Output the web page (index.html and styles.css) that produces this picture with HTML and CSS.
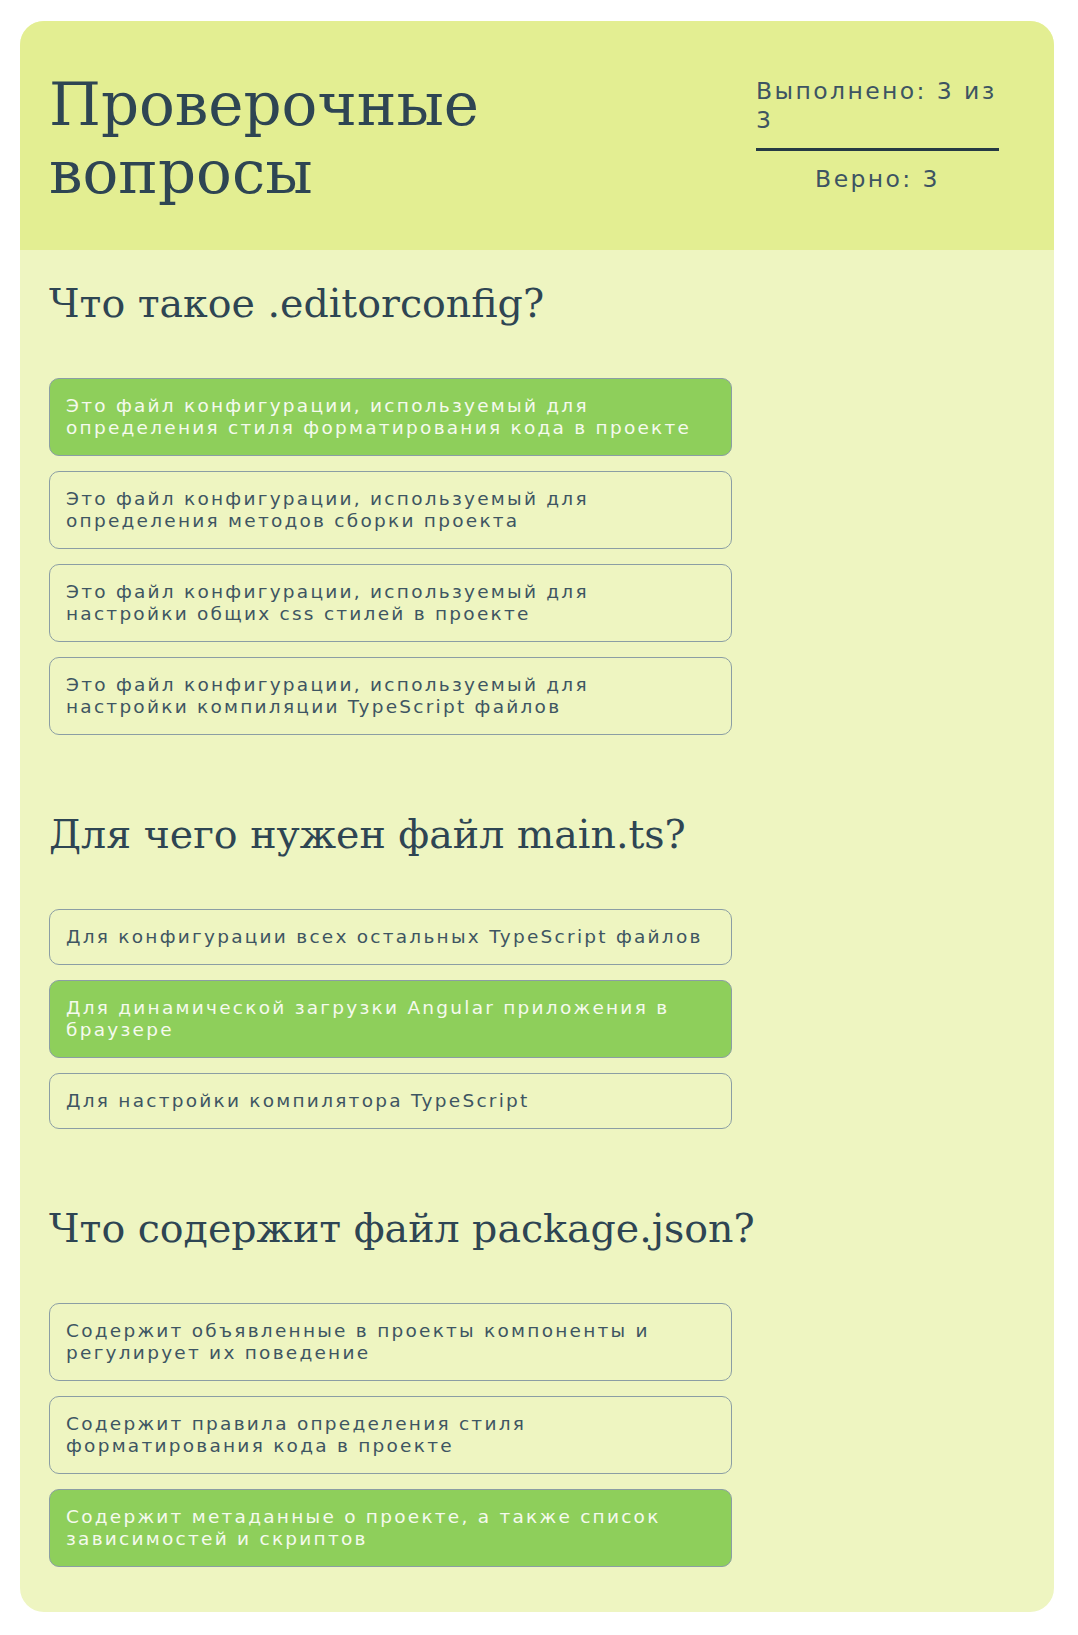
FILE: index.html
```html
<!DOCTYPE html>
<html lang="ru">
<head>
<meta charset="utf-8">
<title>Проверочные вопросы</title>
<link rel="stylesheet" href="styles.css">
</head>
<body>
<div class="card">
  <header class="head">
    <h1 class="title">Проверочные вопросы</h1>
    <div class="stats">
      <p class="stat-done">Выполнено: 3 из 3</p>
      <div class="rule"></div>
      <p class="stat-right">Верно: 3</p>
    </div>
  </header>
  <main class="content">
    <section class="question">
      <h2 class="q-title">Что такое .editorconfig?</h2>
      <ul class="options">
        <li class="option option-correct">Это файл конфигурации, используемый для определения стиля форматирования кода в проекте</li>
        <li class="option">Это файл конфигурации, используемый для определения методов сборки проекта</li>
        <li class="option">Это файл конфигурации, используемый для настройки общих css стилей в проекте</li>
        <li class="option">Это файл конфигурации, используемый для настройки компиляции TypeScript файлов</li>
      </ul>
    </section>
    <section class="question">
      <h2 class="q-title">Для чего нужен файл main.ts?</h2>
      <ul class="options">
        <li class="option">Для конфигурации всех остальных TypeScript файлов</li>
        <li class="option option-correct">Для динамической загрузки Angular приложения в браузере</li>
        <li class="option">Для настройки компилятора TypeScript</li>
      </ul>
    </section>
    <section class="question">
      <h2 class="q-title">Что содержит файл package.json?</h2>
      <ul class="options">
        <li class="option">Содержит объявленные в проекты компоненты и регулирует их поведение</li>
        <li class="option">Содержит правила определения стиля форматирования кода в проекте</li>
        <li class="option option-correct">Содержит метаданные о проекте, а также список зависимостей и скриптов</li>
      </ul>
    </section>
  </main>
</div>
</body>
</html>
```

FILE: styles.css
```css
* {
  box-sizing: border-box;
}

html, body {
  margin: 0;
  padding: 0;
  background: #ffffff;
}

body {
  padding: 21px 24px 24px 20px;
  color: #2e4553;
}

.card {
  background: #eef5c1;
  border-radius: 24px;
  overflow: hidden;
}

.head {
  background: #e3ee92;
  height: 229px;
  display: flex;
  align-items: center;
  justify-content: space-between;
  padding: 0 55px 0 29px;
}

.title {
  margin: 0;
  max-width: 600px;
  font-family: "DejaVu Serif", serif;
  font-weight: normal;
  font-size: 59.5px;
  line-height: 68px;
  color: #2e4553;
  position: relative;
  top: 3px;
}

.stats {
  width: 243px;
  font-family: "DejaVu Sans", sans-serif;
  font-size: 23.5px;
  line-height: 29px;
  letter-spacing: 2.4px;
  color: #3d5462;
}

.stat-done {
  margin: 0;
}

.rule {
  height: 3px;
  background: #263a44;
  margin: 13px 0 14px;
}

.stat-right {
  margin: 0;
  text-align: center;
}

.content {
  padding: 30px 29px 45px 29px;
}

.question + .question {
  margin-top: 76px;
}

.q-title {
  margin: 0;
  font-family: "DejaVu Serif", serif;
  font-weight: normal;
  font-size: 39.5px;
  line-height: 47px;
  color: #2e4553;
}

.options {
  list-style: none;
  margin: 51px 0 0;
  padding: 0;
  width: 70%;
  display: flex;
  flex-direction: column;
  gap: 15px;
}

.option {
  border: 1px solid #8b9ea4;
  border-radius: 10px;
  padding: 16px;
  font-family: "DejaVu Sans", sans-serif;
  font-size: 18.5px;
  line-height: 22px;
  letter-spacing: 2.25px;
  color: #3e5562;
}

.option-correct {
  background: #8ecf5b;
  color: #f5faee;
}
```
